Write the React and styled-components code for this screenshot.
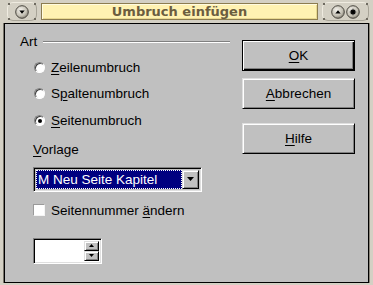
import styled, { createGlobalStyle } from 'styled-components';

const GlobalStyle = createGlobalStyle`
  html, body {
    margin: 0;
    padding: 0;
  }
  body {
    background: #d4d0c4;
    font-family: 'Liberation Sans', Arial, sans-serif;
  }
`;

const Screen = styled.div`
  width: 373px;
  height: 285px;
  display: flex;
  flex-direction: column;
  background: #d4d0c4;
  overflow: hidden;
`;

const TitleBar = styled.div`
  height: 23px;
  display: flex;
  align-items: center;
  gap: 4px;
  padding: 0 4px 0 7px;
  box-sizing: border-box;
`;

const Widget = styled.div`
  position: relative;
  width: ${(p) => p.$w}px;
  height: 19px;
  box-sizing: border-box;
  border: 1px solid #efebe0;
  border-right-color: #a8a498;
  border-bottom-color: #a8a498;
  border-radius: 6px;
  display: flex;
  align-items: center;
  justify-content: center;
  gap: 1px;
`;

const Dot = styled.span`
  position: absolute;
  width: 2px;
  height: 2px;
  background: #6e6a60;
  ${(p) => (p.$top ? 'top: 0;' : 'bottom: 0;')}
  ${(p) => (p.$left ? 'left: 0;' : 'right: 0;')}
`;

const TitleField = styled.div`
  flex: 1;
  height: 17px;
  box-sizing: border-box;
  border: 1px solid #8c7c50;
  box-shadow: inset 1px 1px #fffbe0, inset -1px -1px #e8d890;
  background: #fff2b2;
  display: flex;
  align-items: center;
  justify-content: center;
  font-family: 'DejaVu Sans', sans-serif;
  font-weight: bold;
  font-size: 13px;
  color: #6b5d3f;
`;

const Frame = styled.div`
  flex: 1;
  margin: 0 4px 2px 4px;
  border: 1px solid #000;
  box-shadow: -1px 0 #78746a, 1px 0 #8a857a;
  background: #c0c0c0;
  display: flex;
  gap: 12px;
  padding: 10px 13px 0 15px;
  font-size: 13.5px;
  color: #000;
`;

const LeftColumn = styled.div`
  width: 210px;
  display: flex;
  flex-direction: column;
`;

const GroupHeader = styled.div`
  height: 16px;
  display: flex;
  align-items: center;
  gap: 6px;
  line-height: 16px;
`;

const EtchedLine = styled.div`
  flex: 1;
  height: 0;
  border-top: 1px solid #808080;
  border-bottom: 1px solid #fff;
`;

const RadioList = styled.div`
  margin: 4px 0 0 14px;
  display: flex;
  flex-direction: column;
`;

const OptionRow = styled.label`
  height: ${(p) => p.$h || 26}px;
  display: flex;
  align-items: center;
  gap: 6px;
`;

const RadioDot = styled.span`
  width: 11px;
  height: 11px;
  box-sizing: border-box;
  border-radius: 50%;
  background: #fff;
  border: 1px solid;
  border-color: #808080 #fff #fff #808080;
  box-shadow: inset 1px 1px #404040;
  display: flex;
  align-items: center;
  justify-content: center;

  &::after {
    content: '';
    width: 4px;
    height: 4px;
    border-radius: 50%;
    background: ${(p) => (p.$checked ? '#000' : 'transparent')};
  }
`;

const SubLabel = styled.div`
  margin: 8px 0 0 13px;
  height: 16px;
  line-height: 16px;
`;

const Combo = styled.div`
  margin: 9px 0 0 13px;
  width: 169px;
  height: 25px;
  box-sizing: border-box;
  border: 1px solid;
  border-color: #808080 #fff #fff #808080;
  box-shadow: inset 1px 1px #000, inset -1px -1px #dfdfdf;
  padding: 2px 2px 2px 2px;
  display: flex;
`;

const ComboValue = styled.div`
  flex: 1;
  background: #000080;
  color: #fff;
  border: 1px dotted #fff;
  padding-left: 1px;
  display: flex;
  align-items: center;
  white-space: nowrap;
  overflow: hidden;
`;

const ArrowButton = styled.div`
  width: ${(p) => p.$w}px;
  height: ${(p) => p.$h}px;
  box-sizing: border-box;
  background: #c0c0c0;
  border-top: 1px solid #dfdfdf;
  border-left: 1px solid #dfdfdf;
  border-right: 1px solid #000;
  border-bottom: 1px solid #000;
  box-shadow: inset 1px 1px #fff, inset -1px -1px #808080;
  display: flex;
  align-items: center;
  justify-content: center;
`;

const CheckRow = styled.label`
  margin: 10px 0 0 13px;
  height: 16px;
  display: flex;
  align-items: center;
  gap: 6px;
`;

const CheckBox = styled.span`
  width: 12px;
  height: 12px;
  box-sizing: border-box;
  background: #fff;
  border: 1px solid;
  border-color: #9a9a9a #f4f4f4 #f4f4f4 #9a9a9a;
`;

const Spin = styled.div`
  margin: 20px 0 0 13px;
  width: 69px;
  height: 26px;
  box-sizing: border-box;
  border: 1px solid;
  border-color: #808080 #fff #fff #808080;
  box-shadow: inset 1px 1px #000, inset -1px -1px #dfdfdf;
  background: #fff;
  padding: 2px 2px 2px 0;
  display: flex;
  justify-content: flex-end;
`;

const SpinButtons = styled.div`
  display: flex;
  flex-direction: column;
`;

const ButtonColumn = styled.div`
  width: 113px;
  margin-top: 6px;
  display: flex;
  flex-direction: column;
`;

const PushButton = styled.button`
  height: 31px;
  margin-top: ${(p) => p.$gap || 0}px;
  box-sizing: border-box;
  padding: 0;
  font: inherit;
  color: #000;
  background: #c0c0c0;
  ${(p) =>
    p.$default
      ? `border: 1px solid #000;
         box-shadow: inset 1px 1px #fff, inset -1px -1px #000, inset -2px -2px #808080;`
      : `border: 1px solid;
         border-color: #dfdfdf #000 #000 #dfdfdf;
         box-shadow: inset 1px 1px #fff, inset -1px -1px #808080;`}
`;

const Mnemonic = styled.span`
  text-decoration: underline;
  text-underline-offset: 2px;
`;

const Triangle = ({ up, size = 7 }) => (
  <svg width={size} height={Math.ceil(size / 2) + 1} viewBox={`0 0 ${size} ${Math.ceil(size / 2) + 1}`}>
    <polygon
      points={
        up
          ? `${size / 2},0 ${size},${Math.ceil(size / 2)} 0,${Math.ceil(size / 2)}`
          : `0,0 ${size},0 ${size / 2},${Math.ceil(size / 2)}`
      }
      fill="#000"
    />
  </svg>
);

const Knob = ({ kind }) => (
  <svg width="14" height="14" viewBox="0 0 14 14">
    <defs>
      <radialGradient id={`kg-${kind}`} cx="40%" cy="35%" r="65%">
        <stop offset="0%" stopColor="#f4f2ec" />
        <stop offset="70%" stopColor="#c4c0b4" />
        <stop offset="100%" stopColor="#8c887c" />
      </radialGradient>
    </defs>
    <circle cx="7" cy="7" r="6.3" fill={`url(#kg-${kind})`} stroke="#4a4740" strokeWidth="1" />
    {kind === 'down' && <polygon points="4.3,5.6 9.7,5.6 7,8.8" fill="#000" />}
    {kind === 'up' && <polygon points="4.3,8.6 9.7,8.6 7,5.2" fill="#000" />}
    {kind === 'close' && (
      <g stroke="#000" strokeWidth="1.1">
        <circle cx="7" cy="7" r="2" fill="#000" stroke="none" />
        <line x1="7" y1="3.8" x2="7" y2="10.2" />
        <line x1="3.8" y1="7" x2="10.2" y2="7" />
        <line x1="4.8" y1="4.8" x2="9.2" y2="9.2" />
        <line x1="9.2" y1="4.8" x2="4.8" y2="9.2" />
      </g>
    )}
  </svg>
);

const Corners = () => (
  <>
    <Dot $top $left />
    <Dot $top />
    <Dot $left />
    <Dot />
  </>
);

const options = [
  { pre: '', key: 'Z', post: 'eilenumbruch', checked: false, h: 26 },
  { pre: 'S', key: 'p', post: 'altenumbruch', checked: false, h: 27 },
  { pre: '', key: 'S', post: 'eitenumbruch', checked: true, h: 27 },
];

export default function App() {
  return (
    <Screen>
      <GlobalStyle />
      <TitleBar>
        <Widget $w={30}>
          <Corners />
          <Knob kind="down" />
        </Widget>
        <TitleField>Umbruch einfügen</TitleField>
        <Widget $w={47}>
          <Corners />
          <Knob kind="up" />
          <Knob kind="close" />
        </Widget>
      </TitleBar>
      <Frame>
        <LeftColumn>
          <GroupHeader>
            Art
            <EtchedLine />
          </GroupHeader>
          <RadioList>
            {options.map((o) => (
              <OptionRow key={o.post} $h={o.h}>
                <RadioDot $checked={o.checked} />
                <span>
                  {o.pre}
                  <Mnemonic>{o.key}</Mnemonic>
                  {o.post}
                </span>
              </OptionRow>
            ))}
          </RadioList>
          <SubLabel>
            <Mnemonic>V</Mnemonic>orlage
          </SubLabel>
          <Combo>
            <ComboValue>M Neu Seite Kapitel</ComboValue>
            <ArrowButton $w={17} $h={19}>
              <Triangle />
            </ArrowButton>
          </Combo>
          <CheckRow>
            <CheckBox />
            <span>
              Seitennummer <Mnemonic>ä</Mnemonic>ndern
            </span>
          </CheckRow>
          <Spin>
            <SpinButtons>
              <ArrowButton $w={15} $h={11}>
                <Triangle up size={5} />
              </ArrowButton>
              <ArrowButton $w={15} $h={11}>
                <Triangle size={5} />
              </ArrowButton>
            </SpinButtons>
          </Spin>
        </LeftColumn>
        <ButtonColumn>
          <PushButton $default>
            <Mnemonic>O</Mnemonic>K
          </PushButton>
          <PushButton $gap={7}>
            <Mnemonic>A</Mnemonic>bbrechen
          </PushButton>
          <PushButton $gap={14}>
            <Mnemonic>H</Mnemonic>ilfe
          </PushButton>
        </ButtonColumn>
      </Frame>
    </Screen>
  );
}
